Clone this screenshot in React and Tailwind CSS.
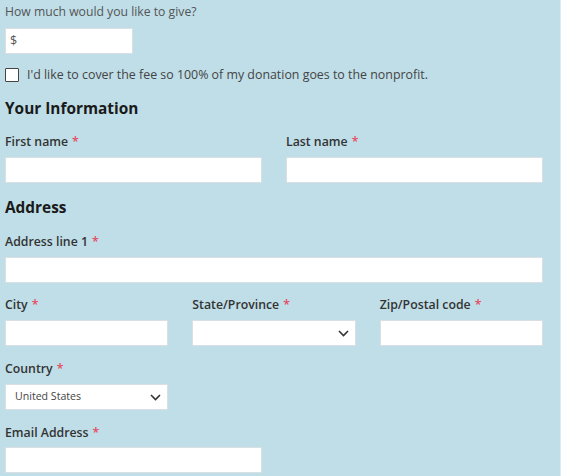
import React from "react";

const Star = () => <span className="text-[#e8485f] ml-[4px]">*</span>;

const Field = ({ label, children }) => (
  <div>
    <label className="block text-[12.3px] leading-[18px] font-semibold text-[#333]">
      {label}
      <Star />
    </label>
    {children}
  </div>
);

const TextBox = ({ className = "" }) => (
  <div className={"h-[26px] bg-white border border-[#d9dfe3] " + className} />
);

const Chevron = () => (
  <svg width="11" height="7" viewBox="0 0 11 7" className="shrink-0">
    <path d="M1 1l4.5 4.5L10 1" fill="none" stroke="#333" strokeWidth="1.6" />
  </svg>
);

const SelectBox = ({ value, className = "" }) => (
  <div
    className={
      "h-[26px] bg-white border border-[#d9dfe3] flex items-center justify-between pl-[9px] pr-[6px] " +
      className
    }
  >
    <span className="text-[10.6px] text-[#444]">{value}</span>
    <Chevron />
  </div>
);

export default function App() {
  return (
    <div className="min-h-[476px] bg-[#bfdee8] pl-[5px] pt-[3px] font-['Open_Sans',sans-serif] border-r border-[#dcebf1]">
      <div className="w-[538px]">
        <p className="text-[12.2px] leading-[18px] text-[#555]">How much would you like to give?</p>
        <div className="mt-[7px] h-[26px] w-[128px] bg-white border border-[#d9dfe3] flex items-center pl-[4px] text-[12.5px] text-[#555]">
          $
        </div>

        <div className="mt-[14px] flex items-center h-[14px]">
          <div className="w-[14px] h-[14px] border-[1.5px] border-[#444] bg-white rounded-[1px]" />
          <span className="ml-[8px] text-[12.4px] text-[#444]">
            I'd like to cover the fee so 100% of my donation goes to the nonprofit.
          </span>
        </div>

        <h2 className="mt-[16px] text-[15.4px] leading-[22px] font-bold text-[#1a1a1a]">Your Information</h2>
        <div className="mt-[13px] grid grid-cols-2 gap-x-[24px]">
          <Field label="First name">
            <TextBox className="mt-[6px]" />
          </Field>
          <Field label="Last name">
            <TextBox className="mt-[6px]" />
          </Field>
        </div>

        <h2 className="mt-[14px] text-[15.4px] leading-[22px] font-bold text-[#1a1a1a]">Address</h2>
        <div className="mt-[14px]">
          <Field label="Address line 1">
            <TextBox className="mt-[6px]" />
          </Field>
        </div>

        <div className="mt-[13px] grid grid-cols-3 gap-x-[24px]">
          <Field label="City">
            <TextBox className="mt-[6px]" />
          </Field>
          <Field label="State/Province">
            <SelectBox value="" className="mt-[6px]" />
          </Field>
          <Field label="Zip/Postal code">
            <TextBox className="mt-[6px]" />
          </Field>
        </div>

        <div className="mt-[14px] grid grid-cols-3 gap-x-[24px]">
          <Field label="Country">
            <SelectBox value="United States" className="mt-[6px]" />
          </Field>
        </div>

        <div className="mt-[14px] grid grid-cols-2 gap-x-[24px]">
          <Field label="Email Address">
            <TextBox className="mt-[5px]" />
          </Field>
        </div>
      </div>
    </div>
  );
}
